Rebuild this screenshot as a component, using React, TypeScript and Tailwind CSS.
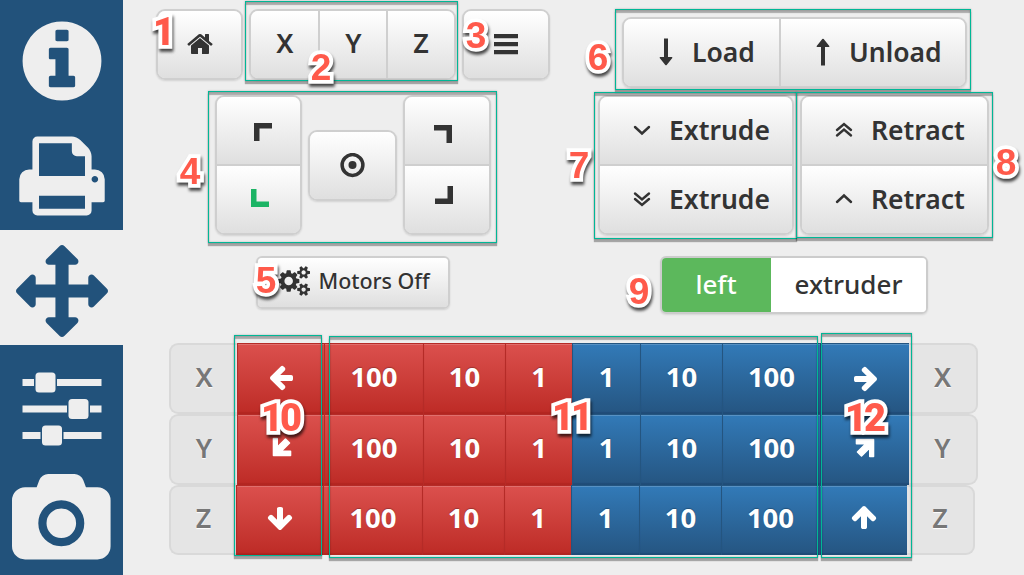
import React from "react";

type IconProps = { d?: string; box?: string; className?: string; children?: React.ReactNode };

function Icon({ d, box = "0 0 1792 1792", className = "", children }: IconProps) {
  return (
    <svg viewBox={box} fill="currentColor" className={`shrink-0 ${className}`} aria-hidden="true">
      {d ? <path d={d} /> : children}
    </svg>
  );
}

const INFO =
  "M1152 1376v-160q0-14-9-23t-23-9h-96v-512q0-14-9-23t-23-9h-320q-14 0-23 9t-9 23v160q0 14 9 23t23 9h96v320h-96q-14 0-23 9t-9 23v160q0 14 9 23t23 9h448q14 0 23-9t9-23zm-128-896v-160q0-14-9-23t-23-9h-192q-14 0-23 9t-9 23v160q0 14 9 23t23 9h192q14 0 23-9t9-23zm640 416q0 209-103 385.5t-279.5 279.5-385.5 103-385.5-103-279.5-279.5-103-385.5 103-385.5 279.5-279.5 385.5-103 385.5 103 279.5 279.5 103 385.5z";
const PRINT =
  "M448 1536h896v-256h-896v256zm0-640h896v-384h-160q-40 0-68-28t-28-68v-160h-640v640zm1152 64q0-26-19-45t-45-19-45 19-19 45 19 45 45 19 45-19 19-45zm128 0v416q0 13-9.5 22.5t-22.5 9.5h-224v160q0 40-28 68t-68 28h-960q-40 0-68-28t-28-68v-160h-224q-13 0-22.5-9.5t-9.5-22.5v-416q0-79 56.5-135.5t135.5-56.5h64v-544q0-40 28-68t68-28h672q40 0 88 20t76 48l152 152q28 28 48 76t20 88v256h64q79 0 135.5 56.5t56.5 135.5z";
const MOVE =
  "M1792 896q0 26-19 45l-256 256q-19 19-45 19t-45-19-19-45v-128h-384v384h128q26 0 45 19t19 45-19 45l-256 256q-19 19-45 19t-45-19l-256-256q-19-19-19-45t19-45 45-19h128v-384h-384v128q0 26-19 45t-45 19-45-19l-256-256q-19-19-19-45t19-45l256-256q19-19 45-19t45 19 19 45v128h384v-384h-128q-26 0-45-19t-19-45 19-45l256-256q19-19 45-19t45 19l256 256q19 19 19 45t-19 45-45 19h-128v384h384v-128q0-26 19-45t45-19 45 19l256 256q19 19 19 45z";
const CAMERA =
  "M960 672q119 0 203.5 84.5t84.5 203.5-84.5 203.5-203.5 84.5-203.5-84.5-84.5-203.5 84.5-203.5 203.5-84.5zm704-416q106 0 181 75t75 181v896q0 106-75 181t-181 75h-1408q-106 0-181-75t-75-181v-896q0-106 75-181t181-75h224l51-136q19-49 69.5-84.5t103.5-35.5h512q53 0 103.5 35.5t69.5 84.5l51 136h224zm-704 1152q185 0 316.5-131.5t131.5-316.5-131.5-316.5-316.5-131.5-316.5 131.5-131.5 316.5 131.5 316.5 316.5 131.5z";
const HOME =
  "M1472 992v480q0 26-19 45t-45 19h-384v-384h-256v384h-384q-26 0-45-19t-19-45v-480q0-1 .5-3t.5-3l575-474 575 474q1 2 1 6zm223-69l-62 74q-8 9-21 11h-3q-13 0-21-7l-692-577-692 577q-12 8-24 7-13-2-21-11l-62-74q-8-10-7-23.5t11-21.5l719-599q32-26 76-26t76 26l244 204v-195q0-14 9-23t23-9h192q14 0 23 9t9 23v408l219 182q10 8 11 21.5t-7 23.5z";
const ARROW =
  "M1600 960q0 54-37 91l-651 651q-39 37-91 37-51 0-90-37l-75-75q-38-38-38-91t38-91l293-293h-704q-52 0-84.5-37.5t-32.5-90.5v-128q0-53 32.5-90.5t84.5-37.5h704l-293-294q-38-36-38-90t38-90l75-75q38-38 90-38 53 0 91 38l651 651q37 35 37 90z";
const COGS =
  "M896 896q0-106-75-181t-181-75-181 75-75 181 75 181 181 75 181-75 75-181zm768 512q0-52-38-90t-90-38-90 38-38 90q0 53 37.5 90.5t90.5 37.5 90.5-37.5 37.5-90.5zm0-1024q0-52-38-90t-90-38-90 38-38 90q0 53 37.5 90.5t90.5 37.5 90.5-37.5 37.5-90.5zm-384 421v185q0 10-7 19.5t-16 10.5l-155 24q-11 35-32 76 34 48 90 115 7 11 7 20 0 12-7 19-23 30-82.5 89.5t-78.5 59.5q-11 0-21-7l-115-90q-37 19-77 31-11 108-23 155-7 24-30 24h-186q-11 0-20-7.5t-10-17.5l-23-153q-34-10-75-31l-118 89q-7 7-20 7-11 0-21-8-144-133-144-160 0-9 7-19 10-14 41-53t47-61q-23-44-35-82l-152-24q-10-1-17-9.5t-7-19.5v-185q0-10 7-19.5t16-10.5l155-24q11-35 32-76-34-48-90-115-7-11-7-20 0-12 7-20 22-30 82-89t79-59q11 0 21 7l115 90q34-18 77-32 11-108 23-154 7-24 30-24h186q11 0 20 7.5t10 17.5l23 153q34 10 75 31l118-89q8-7 20-7 11 0 21 8 144 133 144 160 0 8-7 19-12 16-42 54t-45 60q23 48 34 82l152 23q10 2 17 10.5t7 19.5zm640 533v140q0 16-149 31-12 27-30 52 51 113 51 138 0 4-4 7-122 71-124 71-8 0-46-47t-52-68q-20 2-30 2t-30-2q-14 21-52 68t-46 47q-2 0-124-71-4-3-4-7 0-25 51-138-18-25-30-52-149-15-149-31v-140q0-16 149-31 13-29 30-52-51-113-51-138 0-4 4-7 4-2 35-20t59-34 30-16q8 0 46 46.5t52 67.5q20-2 30-2t30 2q51-71 92-112l6-2q4 0 124 70 4 3 4 7 0 25-51 138 17 23 30 52 149 15 149 31zm0-1024v140q0 16-149 31-12 27-30 52 51 113 51 138 0 4-4 7-122 71-124 71-8 0-46-47t-52-68q-20 2-30 2t-30-2q-14 21-52 68t-46 47q-2 0-124-71-4-3-4-7 0-25 51-138-18-25-30-52-149-15-149-31v-140q0-16 149-31 13-29 30-52-51-113-51-138 0-4 4-7 4-2 35-20t59-34 30-16q8 0 46 46.5t52 67.5q20-2 30-2t30 2q51-71 92-112l6-2q4 0 124 70 4 3 4 7 0 25-51 138 17 23 30 52 149 15 149 31z";

const GROUP =
  "flex overflow-hidden border-2 border-[#cfcfcf] text-[#333] [text-shadow:0_1px_1px_#fff] shadow-[0_1px_2px_rgba(0,0,0,0.12)]";
const FACE = "flex items-center bg-linear-to-b from-white to-[#dfdfdf]";

function Sidebar() {
  return (
    <nav className="flex h-full w-[123px] shrink-0 flex-col items-center bg-[#22527b] text-[#eee]">
      <Icon d={INFO} className="mt-[14.5px] h-[92px] w-[92px]" />
      <Icon d={PRINT} className="mt-[23px] h-[92px] w-[92px]" />
      <div className="mt-[8.5px] flex h-[115px] w-full items-center justify-center bg-[#eee] pt-1.5 text-[#22527b]">
        <Icon d={MOVE} className="h-[92px] w-[92px]" />
      </div>
      <Icon box="0 0 80 74" className="mt-[27px] h-[74px] w-[80px]">
        <path d="M0.5 7h11.5v7h-11.5zM35 7h44.500v7h-44.500zM0.500 33.500h44.500v7h-44.500zM68 33.500h11.500v7h-11.500zM0.500 60h18v7h-18zM41.500 60h38v7h-38z" />
        <rect x="13.500" y="0.500" width="20" height="20" rx="3.500" />
        <rect x="46.500" y="27" width="20" height="20" rx="3.500" />
        <rect x="20" y="53.500" width="20" height="20" rx="3.500" />
      </Icon>
      <Icon d={CAMERA} box="0 0 1920 1792" className="mt-[28px] h-[92px] w-[98.600px]" />
    </nav>
  );
}

function Corner({ d, className }: { d: string; className: string }) {
  return (
    <Icon box="0 0 18 18" className={`h-[18px] w-[18px] ${className}`}>
      <path d={d} />
    </Icon>
  );
}

function Chevrons({ double, up }: { double?: boolean; up?: boolean }) {
  return (
    <svg
      viewBox="0 0 18 18"
      className={up ? "mb-px h-[18px] w-[18px] shrink-0 rotate-180" : "mb-px h-[18px] w-[18px] shrink-0"}
      fill="none"
      stroke="currentColor"
      strokeWidth="2.400"
      strokeLinecap="round"
    >
      {double ? <path d="M2 3.500l7 6 7-6M2 9l7 6 7-6" /> : <path d="M2 6l7 6.500 7-6.500" />}
    </svg>
  );
}

function HeadControls() {
  return (
    <section className="flex w-[394px] shrink-0 flex-col">
      <div className="mt-[9px] flex h-[71px] gap-[6px] text-[27px] font-[560]">
        <button className={`${GROUP} w-[88px] rounded-[9px]`}>
          <span className={`${FACE} h-full w-full justify-center pb-[2px] pl-[2px]`}>
            <Icon d={HOME} className="h-7 w-7" />
          </span>
        </button>
        <div className={`${GROUP} w-[207px] rounded-[9px]`}>
          <button className={`${FACE} w-[69px] justify-center border-r-2 border-[#cfcfcf] pb-[2px]`}>X</button>
          <button className={`${FACE} w-[68px] justify-center border-r-2 border-[#cfcfcf] pb-[2px]`}>Y</button>
          <button className={`${FACE} grow justify-center pb-[2px]`}>Z</button>
        </div>
        <button className={`${GROUP} w-[88px] rounded-[9px]`}>
          <span className={`${FACE} h-full w-full justify-center pb-[2px]`}>
            <Icon box="0 0 24 22" className="h-[22px] w-6">
              <path d="M0 1h24v4.300h-24zM0 9h24v4.300h-24zM0 17h24v4.300h-24z" />
            </Icon>
          </span>
        </button>
      </div>
      <div className="mt-[15px] ml-[59.500px] flex h-[140px] items-center gap-[6px]">
        <div className={`${GROUP} h-full w-[87px] flex-col rounded-[9px]`}>
          <button className={`${FACE} h-[69px] border-b-2 border-[#cfcfcf] pb-[1px] pl-[37px]`}>
            <Corner d="M0 0h18v5.500h-12.500v12.500h-5.500z" className="mt-[3px]" />
          </button>
          <button className={`${FACE} grow pl-[34px] text-[#1cb465]`}>
            <Corner d="M0 0h5.500v12.500h12.500v5.500h-18z" className="-mt-[4px]" />
          </button>
        </div>
        <button className={`${GROUP} h-[71px] w-[89px] rounded-[9px]`}>
          <span className={`${FACE} h-full w-full justify-center`}>
            <svg viewBox="0 0 25 25" className="h-[25px] w-[25px]">
              <circle cx="12.500" cy="12" r="10.400" fill="none" stroke="#333" strokeWidth="3.500" />
              <circle cx="12.500" cy="12" r="4" fill="#333" />
            </svg>
          </span>
        </button>
        <div className={`${GROUP} h-full w-[88px] flex-col rounded-[9px]`}>
          <button className={`${FACE} h-[69px] border-b-2 border-[#cfcfcf] pl-[29px]`}>
            <Corner d="M0 0h18v18h-5.500v-12.500h-12.500z" className="mt-[7px]" />
          </button>
          <button className={`${FACE} grow pl-[30px]`}>
            <Corner d="M12.500 0h5.500v18h-18v-5.500h12.500z" className="-mt-[10px]" />
          </button>
        </div>
      </div>
      <button className={`${GROUP} mt-[21px] ml-[100px] h-[53px] w-[194px] rounded-[6px]`}>
        <span className={`${FACE} h-full w-full pb-[3px] pl-[20px] text-[21.500px] font-medium whitespace-nowrap`}>
          <Icon d={COGS} box="0 0 1920 1792" className="-mt-[1px] h-[30px] w-[32px]" />
          <span className="ml-[9px] tracking-[-0.050px]">Motors Off</span>
        </span>
      </button>
    </section>
  );
}

function LongArrow({ className }: { className: string }) {
  return (
    <Icon box="0 0 14 28" className={`h-7 w-[14px] ${className}`}>
      <path d="M5 0.500h4v18.500h3.800q1 0.300 0.500 1.100l-5.600 6.800q-0.700 0.700-1.400 0l-5.600-6.800q-0.500-0.800 0.500-1.100h3.800z" />
    </Icon>
  );
}

function ExtruderControls() {
  const face = `${FACE} text-[26.500px] font-[580]`;
  return (
    <section className="flex w-[396px] shrink-0 flex-col">
      <div className={`${GROUP} mt-[17px] ml-[26px] h-[71px] w-[345px] rounded-[9px]`}>
        <button className={`${face} w-[157px] border-r-2 border-[#cfcfcf] pl-[35px]`}>
          <LongArrow className="-mt-[2px]" />
          <span className="ml-[19px]">Load</span>
        </button>
        <button className={`${face} grow pl-[35px]`}>
          <LongArrow className="-mt-[1px] rotate-180" />
          <span className="ml-[19px]">Unload</span>
        </button>
      </div>
      <div className="mt-[7px] ml-[2px] flex h-[140px] gap-[6px]">
        <div className={`${GROUP} w-[196px] flex-col rounded-[9px]`}>
          <button className={`${face} h-[69px] border-b-2 border-[#cfcfcf] pl-[33px]`}>
            <Chevrons />
            <span className="ml-[18px]">Extrude</span>
          </button>
          <button className={`${face} grow pl-[33px]`}>
            <Chevrons double />
            <span className="ml-[18px]">Extrude</span>
          </button>
        </div>
        <div className={`${GROUP} w-[189px] flex-col rounded-[9px]`}>
          <button className={`${face} h-[69px] border-b-2 border-[#cfcfcf] pl-[33px]`}>
            <Chevrons double up />
            <span className="ml-[18px]">Retract</span>
          </button>
          <button className={`${face} grow pl-[33px]`}>
            <Chevrons up />
            <span className="ml-[18px]">Retract</span>
          </button>
        </div>
      </div>
      <div className="mt-[21px] ml-[64px] flex h-[58px] w-[268px] overflow-hidden rounded-[6px] border-2 border-[#ccc] text-[26px] font-[550] shadow-[0_1px_2px_rgba(0,0,0,0.1)]">
        <button className="-my-px -ml-px w-[110px] bg-[#5cb85c] pb-[2px] text-white">left</button>
        <button className="grow bg-white pb-[2px] text-[#333]">extruder</button>
      </div>
    </section>
  );
}

const STRAIGHT: Record<string, string> = {
  left: "h-7 w-7 rotate-180 mt-1 ml-[2px]",
  right: "h-7 w-7 mt-[2px]",
  up: "h-7 w-7 -rotate-90 -mt-[1px] -ml-[1px]",
  down: "h-7 w-7 rotate-90 -mt-[1px] ml-[1px]",
};

function JogArrow({ dir }: { dir: string }) {
  if (dir === "southwest" || dir === "northeast") {
    return (
      <svg
        viewBox="0 0 20 20"
        className={dir === "northeast" ? "h-5 w-5 rotate-180" : "h-5 w-5 -mt-[1px] ml-[2px]"}
        fill="white"
        stroke="white"
        strokeWidth="1.600"
        strokeLinejoin="round"
      >
        <path d="M1.500 1.500H5.200V10.300L13.500 2L17.500 6L9.200 14.300H18.500V18.500H1.500Z" />
      </svg>
    );
  }
  return <Icon box="-64 0 1792 1792" d={ARROW} className={STRAIGHT[dir]} />;
}

const RED =
  "flex items-center justify-center bg-linear-to-b from-[#db504d] to-[#bd2a25] border-l-[1.500px] border-t border-[#b52b27] pb-1 text-white shadow-[inset_0_1px_0_rgba(255,255,255,0.18),inset_0_-2px_1px_rgba(140,20,15,0.2)] [text-shadow:0_-1px_1px_rgba(0,0,0,0.25)]";
const BLUE =
  "flex items-center justify-center bg-linear-to-b from-[#327ab8] to-[#255581] border-l-[1.500px] border-t border-[#245580] pb-1 text-white shadow-[inset_0_1px_0_rgba(255,255,255,0.18),inset_0_-2px_1px_rgba(0,30,70,0.15)] [text-shadow:0_-1px_1px_rgba(0,0,0,0.25)]";
const LABEL =
  "flex shrink-0 items-center justify-center border-2 border-[#d9d9d9] bg-[#e5e5e5] pb-[2px] text-[27px] text-[#777] font-[560] [text-shadow:0_1px_1px_#fff]";

const AXES = [
  {
    name: "X", minus: "left", plus: "right", height: "h-[71px]",
    left: "w-[68px]", right: "w-[69px]",
    columns: "grid-cols-[87px_99px_82px_67px_68px_82px_98px_89px]",
  },
  {
    name: "Y", minus: "southwest", plus: "northeast", height: "h-[71px]",
    left: "w-[68px]", right: "w-[69px]",
    columns: "grid-cols-[87px_99px_82px_67px_68px_82px_98px_89px]",
  },
  {
    name: "Z", minus: "down", plus: "up", height: "h-[70px]",
    left: "w-[67px]", right: "w-[68px]",
    columns: "grid-cols-[87px_99px_82px_67px_68px_82px_98px_88px]",
  },
];

function JogTable() {
  return (
    <section className="ml-[46px] flex flex-col text-[27.500px] font-bold">
      {AXES.map((a) => (
        <div key={a.name} className={`flex ${a.height}`}>
          <div className={`${LABEL} ${a.left} rounded-l-[9px] border-r-0`}>{a.name}</div>
          <div className={`grid ${a.columns}`}>
            <button className={RED}><JogArrow dir={a.minus} /></button>
            {[100, 10, 1].map((n) => (
              <button key={n} className={RED}>{n}</button>
            ))}
            {[1, 10, 100].map((n) => (
              <button key={n} className={BLUE}>{n}</button>
            ))}
            <button className={BLUE}><JogArrow dir={a.plus} /></button>
          </div>
          <div className={`${LABEL} ${a.right} rounded-r-[9px] border-l-0`}>{a.name}</div>
        </div>
      ))}
    </section>
  );
}

const OUTLINES = [
  "left-[245px] top-[1px] w-[213px] h-[80px]",
  "left-[615px] top-[9px] w-[356px] h-[81px]",
  "left-[208px] top-[91px] w-[289px] h-[152px]",
  "left-[594px] top-[92px] w-[203px] h-[147px]",
  "left-[796px] top-[92px] w-[197px] h-[146px]",
  "left-[234px] top-[335px] w-[88px] h-[221px]",
  "left-[329px] top-[336px] w-[489px] h-[222px]",
  "left-[821px] top-[333px] w-[91px] h-[225px]",
];

const MARKERS: [string, string][] = [
  ["1", "left-[164px] top-[32px]"],
  ["2", "left-[321px] top-[67px]"],
  ["3", "left-[476px] top-[35px]"],
  ["4", "left-[190px] top-[171px]"],
  ["5", "left-[266px] top-[280px]"],
  ["6", "left-[598px] top-[57px]"],
  ["7", "left-[579px] top-[165px]"],
  ["8", "left-[1006px] top-[162px]"],
  ["9", "left-[639px] top-[291px]"],
  ["10", "left-[280px] top-[418px]"],
  ["11", "left-[571px] top-[417px]"],
  ["12", "left-[864px] top-[418px]"],
];

function Annotations() {
  return (
    <div className="pointer-events-none absolute inset-0">
      {OUTLINES.map((place) => (
        <div
          key={place}
          className={`absolute border border-[#00b796] shadow-[0_3px_1px_rgba(0,0,0,0.3),0_0_2px_rgba(0,0,0,0.25),inset_0_3px_1px_rgba(0,0,0,0.28),inset_0_0_2px_rgba(0,0,0,0.25)] ${place}`}
        />
      ))}
      {MARKERS.map(([label, place]) => (
        <span
          key={label}
          className={`absolute -translate-x-1/2 -translate-y-1/2 leading-none text-[#ff5a4b] [-webkit-text-stroke:7.500px_white] [paint-order:stroke_fill] [stroke-linejoin:round] drop-shadow-[1px_3px_1.500px_rgba(0,0,0,0.7)] ${
            label.startsWith("1")
              ? "font-[Roboto,sans-serif] text-[38px] font-black"
              : "font-['Liberation_Sans',sans-serif] text-[37px] font-bold"
          } ${label.length > 1 ? "tracking-[-3px]" : ""} ${place}`}
        >
          {label}
        </span>
      ))}
    </div>
  );
}

export default function App() {
  return (
    <div className="relative flex h-[575px] w-[1024px] overflow-hidden bg-[#eee] font-['Noto_Sans',sans-serif]">
      <Sidebar />
      <main className="flex grow flex-col">
        <div className="flex h-[342.500px] shrink-0 pl-[32.500px]">
          <HeadControls />
          <div className="w-[46.500px] shrink-0" />
          <ExtruderControls />
        </div>
        <JogTable />
      </main>
      <Annotations />
    </div>
  );
}
